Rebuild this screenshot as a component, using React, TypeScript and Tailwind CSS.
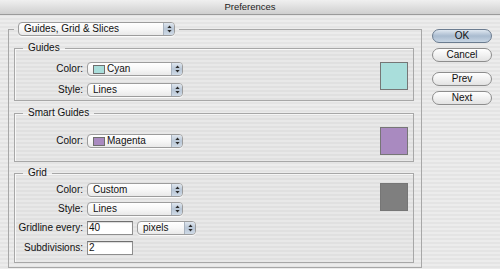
import React from 'react';

const font = "font-['Liberation_Sans',Arial,sans-serif]";

function Arrows() {
  return (
    <svg width="5" height="8" viewBox="0 0 5 8" className="block">
      <path d="M2.5 0.5 L4.6 3 L0.4 3 Z" fill="#2a2a2a" />
      <path d="M2.5 7.5 L4.6 5 L0.4 5 Z" fill="#2a2a2a" />
    </svg>
  );
}

function Popup({ width, label, swatch }: { width: string; label: string; swatch?: string }) {
  return (
    <div className={`${width} h-[14px] flex items-stretch rounded-[4px] border border-[#9c9c9c] bg-gradient-to-b from-white via-[#f7f7f7] to-[#e9e9e9] shadow-[0_1px_0_rgba(255,255,255,0.8)] overflow-hidden`}>
      <div className="flex-1 flex items-center pl-[5px] text-[10px] text-[#111] leading-none">
        {swatch && <span className={`w-[12px] h-[9px] mr-[2px] border border-[#6e6e6e] ${swatch}`} />}
        {label}
      </div>
      <div className="w-[11px] flex items-center justify-center border-l border-[#a9b3bf] bg-gradient-to-b from-[#dfe6ee] via-[#b9c7d7] to-[#cfdae6]">
        <Arrows />
      </div>
    </div>
  );
}

function Field({ label, children }: { label: string; children: React.ReactNode }) {
  return (
    <div className="flex items-center">
      <div className="w-[68px] text-right text-[10px] leading-none text-[#111] whitespace-nowrap">{label}</div>
      <div className="ml-[4px] flex items-center gap-[4px]">{children}</div>
    </div>
  );
}

function TextBox({ value }: { value: string }) {
  return (
    <div className="w-[46px] h-[14px] border border-[#8e8e8e] border-t-[#6f6f6f] bg-white pl-[1px] text-[10px] leading-[12px] text-[#111] shadow-[inset_0_1px_1px_rgba(0,0,0,0.15)]">
      {value}
    </div>
  );
}

function Swatch({ color }: { color: string }) {
  return <div className={`w-[28px] h-[28px] border border-[#767676] ${color}`} />;
}

function Group({ title, className, children }: { title: string; className: string; children: React.ReactNode }) {
  return (
    <fieldset className={`border border-[#a7a7a7] shadow-[inset_1px_1px_0_rgba(255,255,255,0.7)] bg-black/[0.015] ${className}`}>
      <legend className="ml-[8px] px-[5px] h-[12px] text-[10px] leading-[12px] text-[#111]">{title}</legend>
      {children}
    </fieldset>
  );
}

function Button({ label, primary }: { label: string; primary?: boolean }) {
  return (
    <div
      className={`w-[60px] h-[14px] rounded-full border flex items-center justify-center text-[10px] leading-none text-[#111] ${
        primary
          ? 'border-[#6b7c90] bg-gradient-to-b from-[#dfe7f0] via-[#a9bbcf] to-[#c7d5e4]'
          : 'border-[#8d8d8d] bg-gradient-to-b from-white via-[#f1f1f1] to-[#e2e2e2]'
      }`}
    >
      {label}
    </div>
  );
}

export default function App() {
  return (
    <div className={`w-[500px] h-[269px] overflow-hidden ${font} bg-[image:repeating-linear-gradient(180deg,#ececec_0px,#ececec_2px,#e4e4e4_2px,#e4e4e4_4px)]`}>
      {/* title bar */}
      <div className="h-[15px] flex items-center justify-center border-b border-[#9a9a9a] bg-gradient-to-b from-[#f0f0f0] to-[#cfcfcf] text-[9.5px] leading-none text-[#222]">
        Preferences
      </div>

      <div className="flex">
        <div className="pl-[8px] pt-[7px]">
          <fieldset className="w-[414px] border border-[#a7a7a7] pl-[5px] pr-[7px] pb-[4px]">
            <legend className="ml-0 px-[4px] h-[14px]">
              <Popup width="w-[157px]" label="Guides, Grid & Slices" />
            </legend>

            <Group title="Guides" className="mt-[6px] pb-[3px]">
              <div className="flex justify-between pr-[5px] mt-[8px]">
                <div className="flex flex-col gap-[7px]">
                  <Field label="Color:">
                    <Popup width="w-[96px]" label="Cyan" swatch="bg-[#a9dedb]" />
                  </Field>
                  <Field label="Style:">
                    <Popup width="w-[96px]" label="Lines" />
                  </Field>
                </div>
                <Swatch color="bg-[#a9dedb]" />
              </div>
            </Group>

            <Group title="Smart Guides" className="mt-[6px] pb-[6px]">
              <div className="flex justify-between pr-[5px] mt-[8px]">
                <Field label="Color:">
                  <Popup width="w-[96px]" label="Magenta" swatch="bg-[#a98ac0]" />
                </Field>
                <Swatch color="bg-[#a98ac0]" />
              </div>
            </Group>

            <Group title="Grid" className="mt-[5px] pb-[7px]">
              <div className="flex justify-between pr-[5px] mt-[4px]">
                <div className="flex flex-col gap-[5px]">
                  <Field label="Color:">
                    <Popup width="w-[96px]" label="Custom" />
                  </Field>
                  <Field label="Style:">
                    <Popup width="w-[96px]" label="Lines" />
                  </Field>
                  <Field label="Gridline every:">
                    <TextBox value="40" />
                    <Popup width="w-[59px]" label="pixels" />
                  </Field>
                  <div className="mt-[1px]">
                    <Field label="Subdivisions:">
                      <TextBox value="2" />
                    </Field>
                  </div>
                </div>
                <Swatch color="bg-[#7f7f7f]" />
              </div>
            </Group>
          </fieldset>
        </div>

        <div className="ml-[10px] mt-[14px] flex flex-col">
          <Button label="OK" primary />
          <div className="mt-[5px]">
            <Button label="Cancel" />
          </div>
          <div className="mt-[10px]">
            <Button label="Prev" />
          </div>
          <div className="mt-[5px]">
            <Button label="Next" />
          </div>
        </div>
      </div>
    </div>
  );
}
